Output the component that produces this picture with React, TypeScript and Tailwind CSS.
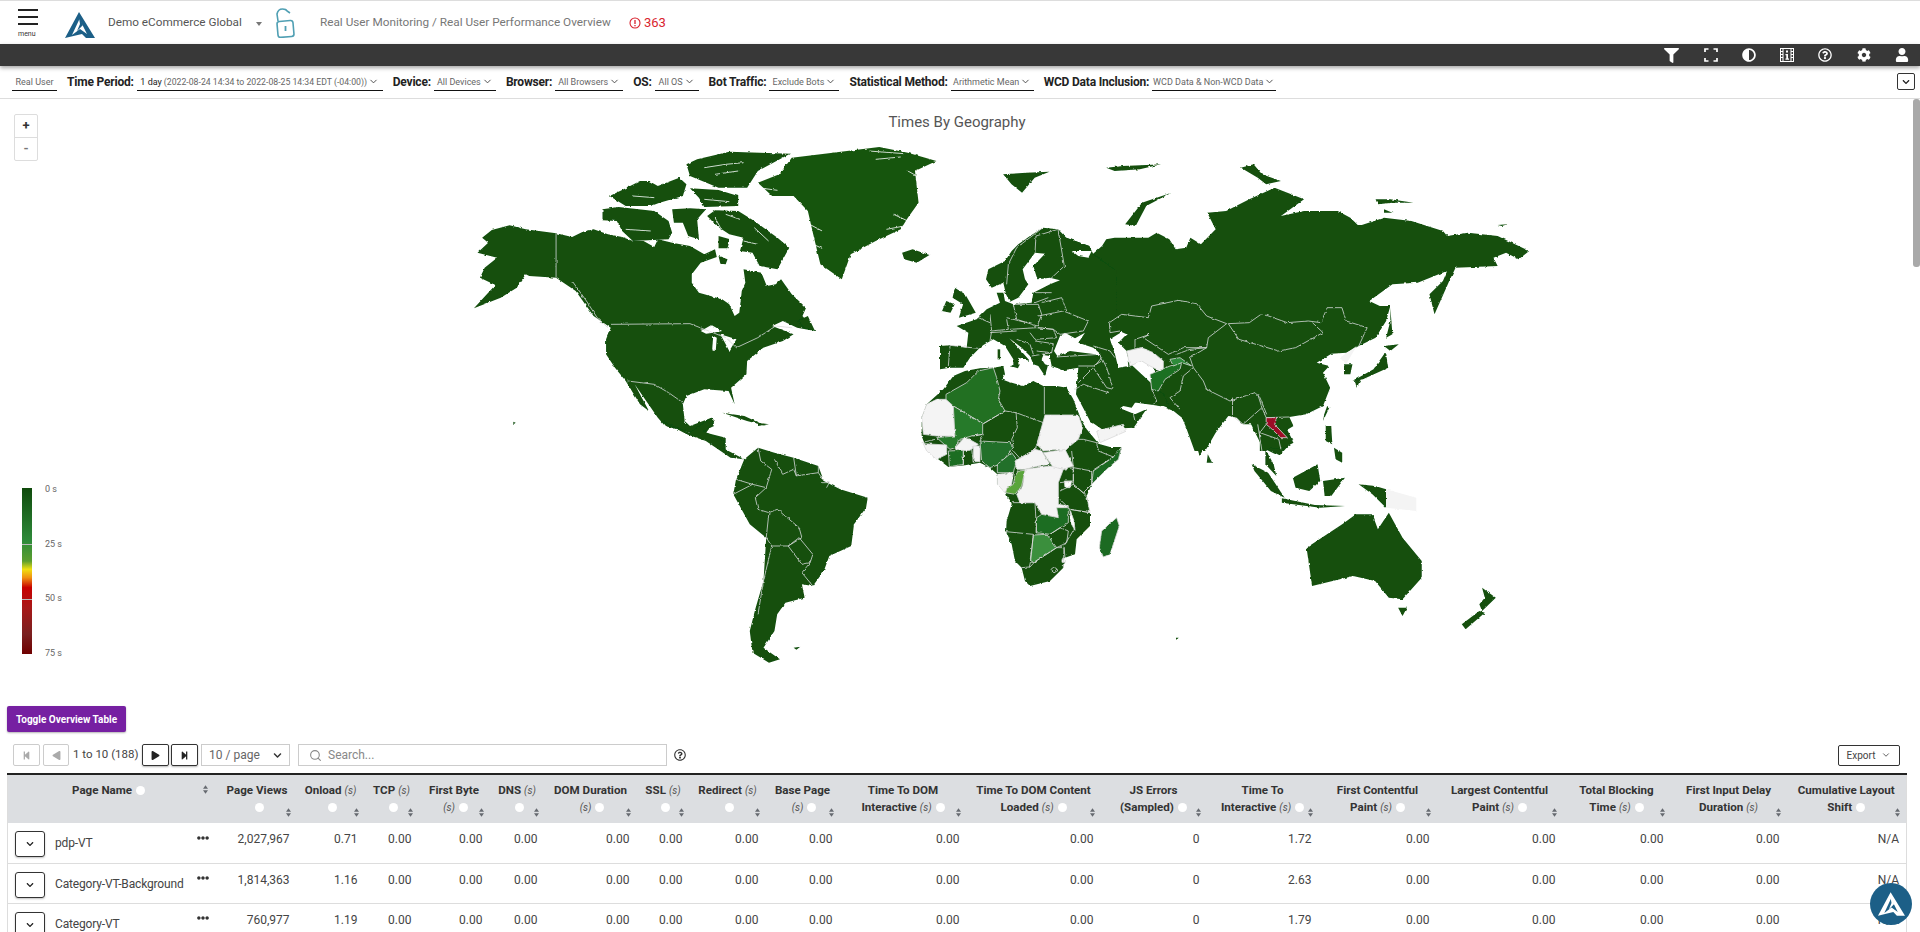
import { FaAdjust, FaChevronDown, FaCog, FaEllipsisH, FaFilter, FaRegQuestionCircle, FaStepBackward, FaStepForward, FaPlay, FaUser } from "react-icons/fa";
import { LuChevronDown, LuSearch } from "react-icons/lu";

const Z8 = "translate(440 130) scale(0.35714 0.33333)";
const Z9 = "translate(900 130) scale(0.42088 0.33333)";
const Z10 = "translate(640 380) scale(0.54855 0.33333)";
const ZE = "translate(950 250) scale(0.33333)";
const ZA = "translate(910 370) scale(0.33333)";

const DARK = "#124f0e";
const GRAY = "#f4f4f4";
const LINE = "#d9d9d9";

const northAmerica = [
  "195,283 240,295 325,307 370,318 400,302 430,295 470,310 510,318 540,330 570,330 600,348 610,325 650,335 700,345 740,370 770,355 775,378 730,395 705,430 705,455 725,485 790,505 810,520 825,555 838,545 845,480 855,455 850,415 900,425 915,465 940,460 955,445 985,490 1025,530 1015,555 1050,600 1000,590 960,570 930,585 990,610 960,630 905,650 860,690 858,730 815,770 825,820 808,780 740,775 690,795 680,820 685,870 700,885 760,860 770,870 745,905 800,920 800,960 770,940 700,905 630,885 610,860 545,760 585,840 560,820 520,750 490,710 465,670 465,625 478,590 430,555 380,480 325,440 250,435 240,430 215,470 170,500 95,532 155,462 112,440 125,410 160,380 105,365 135,335 118,320 145,297",
  "690,100 720,85 810,62 980,68 890,120 860,170 780,170 700,135",
  "700,172 780,177 835,195 835,225 740,228 725,200",
  "475,195 520,172 560,150 585,150 610,165 670,140 690,160 680,195 615,215 590,225 520,225",
  "455,235 500,228 600,240 640,270 650,305 640,325 540,330 510,300 495,270 455,268",
  "650,235 700,232 745,235 720,265 725,325 695,315 680,275 655,275",
  "748,255 770,238 835,240 880,270 945,320 978,350 945,415 895,405 875,365 840,360 850,320 810,310 775,285",
  "780,315 812,325 805,352 780,352",
  "780,375 805,385 800,400 785,398",
  "1000,570 1030,555 1050,600 1020,590",
  "205,872 212,875 206,880",
];

const greenland = "985,80 1100,65 1230,48 1310,65 1390,90 1330,120 1340,215 1310,260 1290,295 1220,330 1150,370 1125,445 1065,400 1045,310 1030,240 990,195 930,195 890,155 950,130";

const fjords = [
  "740,110 800,100 850,95",
  "770,130 835,120",
  "1200,60 1300,68",
  "1220,85 1290,78",
  "1310,120 1335,135",
  "1270,250 1310,270",
  "1250,295 1300,285",
  "1035,280 1070,300",
  "1045,340 1070,352",
  "890,170 945,178",
  "850,330 890,340",
  "520,295 590,300",
  "540,195 600,200",
  "740,205 810,212",
  "770,260 790,300",
  "800,250 840,265",
  "880,290 920,330",
];

const usBorders = [
  "325,307 325,440",
  "478,580 700,578 740,595 800,620 830,650 890,620 940,585 985,590",
  "525,750 600,760 640,785 680,815",
  "370,450 410,510 440,560 470,590",
];

const lakes = [
  "730,600 760,582 790,600 765,605 745,608",
  "765,615 775,620 772,660 762,658",
  "785,610 830,625 810,660 800,640",
];

// russia and asia east of the part traced in the europe group
const eurasia = "395,320 450,345 450,378 480,345 490,325 510,320 590,320 610,305 640,325 655,355 680,350 690,320 715,340 750,295 730,245 775,240 830,205 890,170 960,205 905,255 960,240 1040,240 1070,260 1090,285 1150,260 1215,270 1290,300 1300,315 1350,305 1420,315 1495,360 1470,385 1440,365 1410,380 1420,405 1320,410 1305,450 1270,550 1258,490 1290,450 1300,420 1280,430 1230,455 1170,460 1115,510 1140,525 1165,525 1155,570 1130,620 1090,645 1060,665 1025,668 990,695 1020,705 1005,725 1022,770 1005,825 965,850 925,858 935,885 915,900 935,935 905,955 880,950 870,960 855,960 855,900 835,880 815,880 800,860 780,855 750,905 725,960 700,960 680,890 670,860 650,840 620,825 600,700 450,640 385,520 385,405";

const europe = "279,-70 324,-65 349,-40 418,-15 430,10 500,60 500,300 640,430 660,470 610,462 560,455 515,455 490,420 525,445 555,455 545,470 520,465 510,472 555,490 589,475 551,530 456,535 420,510 378,430 385,350 340,358 305,345 300,320 285,375 265,345 250,340 240,315 215,290 178,262 200,285 240,330 205,320 205,342 190,345 190,325 165,285 130,265 100,282 85,295 60,320 40,350 0,350 -30,355 -30,285 0,283 50,290 55,245 20,225 80,205 110,175 150,155 140,125 160,125 165,150 190,160 245,155 250,125 300,100 330,88 300,80 262,85 250,45 285,8 255,5 218,55 225,85 235,100 205,140 180,152 168,130 160,95 125,110 108,85 115,55 165,30 185,0 205,-20 240,-45";

const euroSeas = [
  "312,300 330,255 345,245 375,262 405,245 385,275 430,290 455,312 400,305 360,300 322,315",
  "480,265 515,243 530,250 505,275 530,300 535,345 505,350 495,310",
  "280,312 300,315 300,345 285,340 275,325",
  "365,0 425,0 415,20 385,15",
];

const euroFills: [string, string][] = [
  ["530,300 575,290 610,305 640,330 640,365 600,345 575,330 540,345", GRAY],
  ["600,370 660,345 695,335 690,355 645,385 625,420 605,415", "#1f6f24"],
  ["660,325 690,320 725,345 695,335 670,345", "#2e8b3a"],
];

const euroBorders = [
  "478,215 515,190 595,200 605,165 685,148 740,158 770,195 830,218",
  "478,215 480,245 510,240",
  "555,265 600,250 580,260 640,300 655,310 700,290 770,290 775,260 830,218",
  "555,265 555,295 575,290",
  "680,310 720,295 770,290",
  "770,290 720,320 730,350 760,390 770,415 840,450 915,425 930,440 950,490",
  "730,350 700,375 690,420 660,440 690,475",
  "455,320 470,350 490,415",
  "605,415 620,450 610,460",
  "385,395 430,350 455,320",
  "430,350 470,410 490,415",
  "375,415 400,400 475,425",
  "550,490 555,510",
  "320,318 450,310 455,330 430,345 385,345",
  "430,285 480,300 495,320",
  "265,195 340,180 415,210 400,240 330,250 310,235 262,230",
  "275,155 335,140 350,180",
  "255,125 305,125",
  "255,155 295,140",
  "190,160 265,160 275,190 262,225 200,205 190,160",
  "120,190 125,240 175,235 170,205",
  "85,200 120,215",
  "125,240 120,270",
  "262,230 310,235 320,260 255,265 240,245",
  "255,270 310,278 305,305 260,300",
  "180,235 262,230",
  "120,245 200,240",
  "170,200 230,215",
  "200,265 240,280 250,310",
  "245,315 305,305",
  "0,285 -5,345",
  "0,283 85,292",
  "170,100 175,40 200,-10 279,-70",
  "255,5 258,-45 324,-65",
  "324,-65 343,45 300,85",
];

const asiaIslands = [
  "130,470 155,490 180,545 140,560 150,520 125,500",
  "100,540 110,510 130,520 120,545",
  "5,365 30,355 70,372 40,395 10,385",
  "245,130 300,125 355,122 320,140 290,185 265,160",
  "535,280 575,215 645,185 585,225 560,285",
  "490,110 530,105 620,100 570,115 510,120",
  "810,110 840,100 860,130 905,150 870,160 850,140",
  "1130,205 1165,205 1220,215 1170,215 1135,220",
  "1150,235 1170,245 1150,245",
  "1420,282 1443,280 1430,285",
  "1165,530 1170,610 1155,620 1165,570",
  "1150,645 1185,640 1165,660",
  "1155,670 1160,710 1100,745 1075,750 1125,715 1150,670",
  "1080,745 1095,745 1085,770",
  "1055,700 1075,700 1070,730 1055,730",
  "1015,825 1020,830 1005,870 1008,850",
  "232,655 238,655 238,685 232,685",
  "262,705 285,700 280,712",
];

const asiaBorders = [
  "780,578 830,575 860,548 920,575 970,570 1000,575 1015,530 1050,530 1060,570 1110,590 1090,645",
  "780,578 805,625 900,660 940,650 1005,605 980,575",
  "790,800 790,855 815,880 860,830",
  "850,790 860,830 870,860 925,858",
  "850,880 860,960",
  "870,880 855,905 900,925 905,955",
];

const africa = "100,55 130,15 165,0 210,-8 250,-10 280,-15 285,10 275,25 295,32 340,45 370,30 400,45 440,45 470,50 490,85 515,150 530,175 555,205 565,218 600,228 635,228 625,265 590,295 545,340 530,375 540,425 540,465 500,505 495,550 465,560 460,590 420,630 360,645 345,630 335,590 315,570 305,520 288,480 290,450 305,400 295,385 285,360 262,340 262,310 240,290 210,275 165,283 115,288 85,265 50,235 35,195 35,140 50,100";

const africaFills: [string, string][] = [
  ["35,140 50,100 80,85 108,85 130,105 135,195 80,195 40,190", GRAY],
  ["108,70 170,35 205,0 250,-10 260,20 270,60 265,85 285,120 220,158 180,135 130,105 108,85", "#206f22"],
  ["130,105 218,158 218,190 185,195 150,205 135,230 120,235 80,200 135,195", "#257a29"],
  ["40,218 110,222 110,250 80,265 50,240", GRAY],
  ["135,230 165,198 205,220 180,238 140,240", GRAY],
  ["115,240 160,238 160,280 118,287", "#1f6d22"],
  ["190,225 210,225 210,272 190,272", GRAY],
  ["210,210 300,215 310,230 270,280 240,290 215,270", "#22702a"],
  ["305,245 320,265 310,305 262,305 262,280", "#22702a"],
  ["315,270 375,235 395,240 420,280 385,285 345,295 320,295", GRAY],
  ["405,132 505,132 518,170 505,205 480,225 465,240 440,235 400,240 380,220 390,185", GRAY],
  ["400,245 465,235 490,285 460,295 430,290", GRAY],
  ["262,310 310,305 305,340 285,365 262,340", GRAY],
  ["345,295 420,285 460,295 445,335 445,400 475,405 445,440 395,430 375,395 330,395 320,370 338,345", GRAY],
  ["325,300 345,298 335,345 315,370 287,365 290,352 310,340 315,315", "#5aa53a"],
  ["380,440 395,430 445,440 440,410 475,410 475,455 420,490 378,485", "#1f6d22"],
  ["370,492 410,490 440,530 375,572 360,570 365,535", "#3a8f3e"],
  ["635,228 625,265 590,295 545,340 550,300 610,258", "#1c6a22"],
  ["620,440 628,465 600,550 580,558 568,530 575,480", "#1c6a22"],
  ["480,415 492,450 495,478 482,455", "#ffffff"],
  ["463,330 485,330 480,350 465,350", "#ffffff"],
  ["456,562 466,562 466,574 456,574", "#ffffff"],
  ["560,180 640,160 650,180 570,215", GRAY],
];

const africaBorders = [
  "285,120 318,125 400,155",
  "403,45 403,130",
  "318,125 322,170 305,205 310,230",
  "220,158 285,120",
  "190,195 220,190 210,210",
  "310,240 330,262 375,235 392,190",
  "505,205 520,205 560,215 565,240 610,258 545,300 490,290 485,240",
  "545,300 545,340 520,365 490,340 490,295",
  "450,360 490,340 530,375 540,425 480,415 450,385",
  "460,295 490,290 490,330 450,335",
  "480,415 540,425",
  "465,560 462,525 492,475",
  "420,490 450,470 475,480 470,515 440,530",
  "288,482 370,490 362,570 358,588 335,590",
  "305,395 375,395 380,485",
  "358,590 375,572 440,530 462,530 460,590",
  "423,595 432,588 442,595 435,605 425,603 423,595",
  "35,215 75,205",
  "160,238 160,282",
  "185,235 190,275",
];

const southAmerica = "190,235 215,200 245,215 280,230 325,255 335,300 365,325 415,350 412,380 390,430 385,495 345,525 335,570 315,615 295,610 300,650 265,665 250,700 245,750 225,800 255,835 235,845 205,815 200,750 210,685 225,600 230,470 200,430 170,340 175,295";

const saBorders = [
  "215,200 220,240 240,265 230,320 210,350 215,385 235,395 230,470",
  "245,235 260,280 280,265 285,285 325,275 335,300",
  "280,230 285,285",
  "325,255 325,275",
  "170,340 205,310 230,320",
  "175,295 205,310",
  "235,395 250,385 290,440 295,470 270,495 240,495 230,470",
  "270,495 290,470 315,520 310,545 295,550 270,495",
  "225,600 240,495",
  "295,575 315,615",
  "295,575 310,545",
  "215,700 225,600",
  "330,305 345,305 340,320",
];

const otherLand = [
  "40,120 90,155 130,110 135,135 115,150 155,180 150,200 190,235 165,230 120,180 85,160",
  "150,95 190,105 230,135 195,120",
  "215,125 235,130 215,135",
  "1000,110 1020,225 1035,180 1060,130 1020,80",
  "1105,100 1135,200 1140,205 1165,225 1190,180 1175,130 1150,80 1110,60",
  "1215,500 1280,430 1305,400 1335,400 1345,445 1365,395 1390,470 1425,540 1425,590 1390,655 1365,650 1340,600 1300,585 1225,615",
  "1382,680 1398,680 1390,705",
  "1535,620 1560,650 1535,690 1530,670 1540,650",
  "1530,690 1540,695 1505,745 1498,730",
  "1115,250 1145,275 1175,350 1150,330 1120,270",
  "1170,352 1230,372 1285,375 1240,380 1170,365",
  "1190,290 1235,250 1240,300 1220,330 1195,320",
  "1140,205 1155,250 1160,285 1140,250",
  "1245,300 1285,290 1260,345 1248,345",
  "1310,310 1340,315 1360,325 1360,380 1335,340",
  "1250,135 1260,135 1262,190 1250,180",
  "1265,200 1280,215 1280,245 1268,235",
  "1035,220 1043,245 1033,245",
  "975,770 982,770 978,776",
  "280,800 292,797 285,806",
];

const seaBorders = [
  "1115,100 1145,195",
  "1135,120 1190,180",
  "1140,190 1165,160 1180,170",
  "1150,80 1130,120 1130,170",
];

function Land(props: { pts: string; fill?: string; line?: boolean }) {
  return (
    <polygon
      points={props.pts}
      fill={props.fill || DARK}
      stroke={props.line ? LINE : "none"}
      strokeWidth={0.8}
      vectorEffect="non-scaling-stroke"
    />
  );
}

function Border(props: { pts: string; color?: string }) {
  return (
    <polyline
      points={props.pts}
      fill="none"
      stroke={props.color || LINE}
      strokeWidth={0.8}
      vectorEffect="non-scaling-stroke"
    />
  );
}

function WorldMap() {
  return (
    <svg viewBox="0 98 1920 602" className="absolute left-0 top-0 w-[1920px] h-[602px]">
      <defs>
        <filter id="coast" x="300" y="100" width="1300" height="600" filterUnits="userSpaceOnUse">
          <feTurbulence type="fractalNoise" baseFrequency="0.25" numOctaves="2" seed="4" result="n" />
          <feDisplacementMap in="SourceGraphic" in2="n" scale="2.5" xChannelSelector="R" yChannelSelector="G" />
        </filter>
      </defs>
      <g filter="url(#coast)">
        <g transform={Z8}>
          {northAmerica.map((p, i) => <Land key={i} pts={p} />)}
          <Land pts={greenland} fill="#15550f" />
          {lakes.map((p, i) => <Land key={i} pts={p} fill="#ffffff" />)}
          {fjords.map((p, i) => <Border key={i} pts={p} color="#ffffff" />)}
          {usBorders.map((p, i) => <Border key={i} pts={p} />)}
        </g>
        <g transform={Z10}>
          <Land pts={southAmerica} />
          {saBorders.map((p, i) => <Border key={i} pts={p} />)}
          {otherLand.map((p, i) => <Land key={i} pts={p} />)}
          <Land pts="1360,325 1415,350 1415,390 1360,380" fill={GRAY} />
          {seaBorders.map((p, i) => <Border key={i} pts={p} />)}
        </g>
        <g transform={Z9}>
          <Land pts={eurasia} />
          {asiaIslands.map((p, i) => <Land key={i} pts={p} />)}
          <Land pts="1045,680 1085,645 1060,700" fill={GRAY} />
          {asiaBorders.map((p, i) => <Border key={i} pts={p} />)}
          <Land pts="870,860 895,860 890,880 920,920 905,920 880,890 870,880" fill="#9c1025" line />
        </g>
        <g transform={ZE}>
          <Land pts={europe} />
          {euroSeas.map((p, i) => <Land key={i} pts={p} fill="#ffffff" />)}
          {euroFills.map((f, i) => <Land key={i} pts={f[0]} fill={f[1]} line />)}
          {euroBorders.map((p, i) => <Border key={i} pts={p} />)}
        </g>
        <g transform={ZA}>
          <Land pts={africa} />
          {africaFills.map((f, i) => <Land key={i} pts={f[0]} fill={f[1]} line />)}
          {africaBorders.map((p, i) => <Border key={i} pts={p} />)}
        </g>
      </g>
    </svg>
  );
}

function Logo(props: { className: string; fill: string }) {
  return (
    <svg viewBox="0 0 30 26" className={props.className} fill={props.fill}>
      <path d="M14 0 L0 26 L17 22 L21 26 L30 26 Z M14.5 7 L22 22 L15 17 L7 23 Z" fillRule="evenodd" />
      <path d="M13.5 3 L18 13 L12 19 L15 12 Z" />
    </svg>
  );
}

function Dropdown(props: { w: string; plain?: boolean; children: React.ReactNode }) {
  return (
    <div className={`${props.w} h-[22px] border-b border-[#111] flex items-end justify-center pb-[1px] text-[9px] leading-[14px] text-[#666] whitespace-nowrap`}>
      {props.children}
      {!props.plain && <LuChevronDown className="ml-[1px] mb-[2px] w-[11px] h-[11px] text-[#444] shrink-0" />}
    </div>
  );
}

function Filter(props: { label: string; w: string; children: React.ReactNode }) {
  return (
    <div className="flex items-center gap-[3px]">
      <span className="mt-[3px] text-[12px] font-bold tracking-[-0.2px] text-[#222] whitespace-nowrap">{props.label}</span>
      <Dropdown w={props.w}>{props.children}</Dropdown>
    </div>
  );
}

function Info() {
  return <span className="inline-block w-[9px] h-[9px] rounded-full bg-white ml-[4px] align-[-1px]" />;
}

function Sort() {
  return (
    <svg viewBox="0 0 6 10" className="w-[5px] h-[9px]" fill="#666a70">
      <path d="M3 0 L6 4 L0 4 Z M3 10 L0 6 L6 6 Z" />
    </svg>
  );
}

function Unit() {
  return <span className="font-normal italic text-[10px] text-[#555] ml-[3px]">(s)</span>;
}

interface Col {
  w: string;
  l1: string;
  l2: string;
  u1?: boolean;
  u2?: boolean;
  noInfo?: boolean;
}

const cols: Col[] = [
  { w: "w-[79px]", l1: "Page Views", l2: "" },
  { w: "w-[68px]", l1: "Onload", l2: "", u1: true },
  { w: "w-[54px]", l1: "TCP", l2: "", u1: true },
  { w: "w-[71px]", l1: "First Byte", l2: "", u2: true },
  { w: "w-[55px]", l1: "DNS", l2: "", u1: true },
  { w: "w-[92px]", l1: "DOM Duration", l2: "", u2: true },
  { w: "w-[53px]", l1: "SSL", l2: "", u1: true },
  { w: "w-[76px]", l1: "Redirect", l2: "", u1: true },
  { w: "w-[74px]", l1: "Base Page", l2: "", u2: true },
  { w: "w-[127px]", l1: "Time To DOM", l2: "Interactive", u2: true },
  { w: "w-[134px]", l1: "Time To DOM Content", l2: "Loaded", u2: true },
  { w: "w-[106px]", l1: "JS Errors", l2: "(Sampled)" },
  { w: "w-[112px]", l1: "Time To", l2: "Interactive", u2: true },
  { w: "w-[118px]", l1: "First Contentful", l2: "Paint", u2: true },
  { w: "w-[126px]", l1: "Largest Contentful", l2: "Paint", u2: true },
  { w: "w-[108px]", l1: "Total Blocking", l2: "Time", u2: true },
  { w: "w-[116px]", l1: "First Input Delay", l2: "Duration", u2: true, noInfo: true },
  { w: "w-[120px]", l1: "Cumulative Layout", l2: "Shift" },
];

const z = "0.00";
const rows = [
  { name: "pdp-VT", vals: ["2,027,967", "0.71", z, z, z, z, z, z, z, z, z, "0", "1.72", z, z, z, z, "N/A"] },
  { name: "Category-VT-Background", vals: ["1,814,363", "1.16", z, z, z, z, z, z, z, z, z, "0", "2.63", z, z, z, z, "N/A"] },
  { name: "Category-VT", vals: ["760,977", "1.19", z, z, z, z, z, z, z, z, z, "0", "1.79", z, z, z, z, "N/A"] },
];

function PageButton(props: { disabled?: boolean; w: string; children: React.ReactNode }) {
  return (
    <button className={`${props.w} h-[22px] flex items-center justify-center rounded-[2px] border ${props.disabled ? "border-[#ccc] text-[#aaa]" : "border-[#333] text-[#222] shadow-[0_1px_2px_rgba(0,0,0,0.3)]"}`}>
      {props.children}
    </button>
  );
}

export default function App() {
  return (
    <div className="relative w-[1920px] h-[932px] overflow-hidden bg-white font-['Roboto',sans-serif] text-[#444]">
      {/* top header */}
      <header className="h-[44px] border-t border-[#ddd] flex items-center">
        <div className="w-[65px] pl-[18px] flex flex-col items-start">
          <div className="w-[20px] flex flex-col gap-[5px] mt-[2px]">
            <span className="h-[2px] bg-[#222]" />
            <span className="h-[2px] bg-[#222]" />
            <span className="h-[2px] bg-[#222]" />
          </div>
          <span className="text-[7px] leading-[8px] mt-[5px] text-[#333]">menu</span>
        </div>
        <Logo className="w-[30px] h-[26px] mt-[4px]" fill="#1c5f87" />
        <span className="ml-[13px] text-[11.75px] text-[#555] w-[133px] whitespace-nowrap">Demo eCommerce Global</span>
        <span className="ml-[15px] mt-[3px] w-0 h-0 border-x-[3px] border-x-transparent border-t-[4px] border-t-[#777]" />
        <svg viewBox="0 0 20 30" className="ml-[14px] w-[20px] h-[30px]" fill="none" stroke="#4f9fb3" strokeWidth="1.6">
          <path d="M2 13 L1 6 Q2 1 6.5 1 Q10 1 11 3 L14 5" />
          <rect x="1.5" y="13" width="16" height="16" rx="2.5" transform="rotate(-5 9 21)" />
          <path d="M9.5 18 V23" strokeWidth="1.8" />
        </svg>
        <span className="ml-[24px] w-[290px] text-[11.75px] text-[#777] whitespace-nowrap">Real User Monitoring / Real User Performance Overview</span>
        <svg viewBox="0 0 12 12" className="ml-[19px] w-[12px] h-[12px]" fill="none" stroke="#d9232e" strokeWidth="1.1">
          <circle cx="6" cy="6" r="5" />
          <path d="M6 3 V7 M6 8 V9.2" strokeWidth="1.3" />
        </svg>
        <span className="ml-[3px] text-[13px] text-[#d9232e]">363</span>
      </header>

      {/* dark toolbar */}
      <div className="relative z-10 h-[22px] bg-[#383838] shadow-[0_2px_4px_rgba(0,0,0,0.35)] flex items-center justify-end pr-[11px] gap-[24.3px] text-white">
        <FaFilter className="w-[15px] h-[15px]" />
        <svg viewBox="0 0 14 14" className="w-[14px] h-[14px]" fill="none" stroke="white" strokeWidth="1.7">
          <path d="M1 4 V1 H4.5 M9.5 1 H13 V4 M13 10 V13 H9.5 M4.5 13 H1 V10" />
        </svg>
        <FaAdjust className="w-[14px] h-[14px]" />
        <svg viewBox="0 0 14 14" className="w-[14px] h-[14px]" fill="white">
          <path d="M0 0 H14 V14 H0 Z M1 1 V3 H2.5 V1 Z M1 4 V6 H2.5 V4 Z M1 7 V9 H2.5 V7 Z M1 10 V13 H2.5 V10 Z M11.5 1 V3 H13 V1 Z M11.5 4 V6 H13 V4 Z M11.5 7 V9 H13 V7 Z M11.5 10 V13 H13 V10 Z M3.5 1 V13 H10.5 V1 Z" fillRule="evenodd" />
          <path d="M6 2.5 H8 V4.5 H6 Z M5.5 6 H8 V10.5 H9 V11.8 H5.5 V10.5 H6.3 V7.2 H5.5 Z" />
        </svg>
        <FaRegQuestionCircle className="w-[14px] h-[14px]" />
        <FaCog className="w-[14px] h-[14px]" />
        <FaUser className="w-[14px] h-[14px]" />
      </div>

      {/* filters */}
      <div className="relative h-[33px] border-b border-[#ddd] flex items-start pt-[3px] pl-[12px] gap-[10px]">
        <Dropdown w="w-[45px]" plain>Real User</Dropdown>
        <Filter label="Time Period:" w="w-[246px]">
          <span className="text-[9px] text-[#222] mr-[2px]">1 day</span>
          <span className="text-[8.7px]">(2022-08-24 14:34 to 2022-08-25 14:34 EDT (-04:00))</span>
        </Filter>
        <Filter label="Device:" w="w-[62px]">All Devices</Filter>
        <Filter label="Browser:" w="w-[68px]">All Browsers</Filter>
        <Filter label="OS:" w="w-[44px]">All OS</Filter>
        <Filter label="Bot Traffic:" w="w-[70px]">Exclude Bots</Filter>
        <Filter label="Statistical Method:" w="w-[83px]">Arithmetic Mean</Filter>
        <Filter label="WCD Data Inclusion:" w="w-[124px]">{"WCD Data & Non-WCD Data"}</Filter>
        <button className="absolute right-[5px] top-[7px] w-[18px] h-[17px] border border-[#333] rounded-[2px] flex items-center justify-center text-[#222]">
          <FaChevronDown className="w-[8px] h-[8px]" />
        </button>
      </div>

      {/* map */}
      <section className="relative h-[601px]">
        <WorldMap />
        <h2 className="relative pt-[14px] text-center text-[15px] leading-[18px] text-[#555] pr-[6px]">Times By Geography</h2>
        <div className="absolute left-[14px] top-[15px] w-[24px] h-[47px] border border-[#ddd] rounded-[2px] flex flex-col text-[#333] text-[13px] font-bold">
          <span className="h-[23px] border-b border-[#ddd] flex items-center justify-center">+</span>
          <span className="flex-1 flex items-center justify-center text-[#777]">-</span>
        </div>
        <div className="absolute left-[22px] top-[389px] h-[166px] flex">
          <div className="relative w-[10px] h-[166px] bg-[linear-gradient(to_bottom,#0f4a0c_0%,#2e8b3a_32%,#5c9e2e_44%,#f0e010_49%,#f09010_54%,#c80000_60%,#a81818_72%,#7a2020_88%,#700000_100%)]">
            <span className="absolute left-0 top-[56px] w-[10px] h-[1px] bg-[#bbb]" />
            <span className="absolute left-0 top-[111px] w-[10px] h-[1px] bg-[#bbb]" />
          </div>
          <div className="absolute left-[23px] top-[-5px] h-[176px] flex flex-col justify-between text-[9px] leading-[12px] text-[#666] whitespace-nowrap">
            <span>0 s</span>
            <span>25 s</span>
            <span>50 s</span>
            <span>75 s</span>
          </div>
        </div>
      </section>

      {/* toggle */}
      <button className="block mt-[6px] ml-[7px] w-[119px] h-[26px] bg-[#7620a2] rounded-[2px] text-white text-[10px] font-bold shadow-[0_1px_2px_rgba(0,0,0,0.3)]">
        Toggle Overview Table
      </button>

      {/* pagination */}
      <div className="mt-[12px] h-[22px] flex items-center pl-[13px] pr-[20px]">
        <PageButton disabled w="w-[27px]"><FaStepBackward className="w-[9px] h-[9px]" /></PageButton>
        <span className="ml-[3px]" />
        <PageButton disabled w="w-[26px]"><FaPlay className="w-[9px] h-[9px] rotate-180" /></PageButton>
        <span className="ml-[4px] w-[69px] text-[11.5px] whitespace-nowrap text-[#444]">1 to 10 (188)</span>
        <PageButton w="w-[27px]"><FaPlay className="w-[9px] h-[9px]" /></PageButton>
        <span className="ml-[2px]" />
        <PageButton w="w-[27px]"><FaStepForward className="w-[9px] h-[9px]" /></PageButton>
        <div className="ml-[3px] w-[89px] h-[22px] border border-[#ccc] flex items-center justify-between px-[7px] text-[12px] text-[#666]">
          10 / page
          <FaChevronDown className="w-[9px] h-[9px] text-[#333]" />
        </div>
        <div className="ml-[8px] w-[369px] h-[22px] border border-[#ccc] flex items-center pl-[10px] text-[12px] text-[#888]">
          <LuSearch className="w-[13px] h-[13px] mr-[6px] text-[#888]" />
          Search...
        </div>
        <FaRegQuestionCircle className="ml-[7px] w-[12px] h-[12px] text-[#333]" />
        <button className="ml-auto w-[62px] h-[21px] border border-[#333] rounded-[2px] flex items-center justify-center gap-[6px] text-[10px] text-[#444]">
          Export
          <LuChevronDown className="w-[10px] h-[10px]" />
        </button>
      </div>

      {/* table */}
      <table className="mt-[7px] ml-[7px] w-[1899px] table-fixed border-collapse border-x border-[#ddd]">
        <colgroup>
          <col className="w-[210px]" />
          {cols.map((c) => <col key={c.l1} className={c.w} />)}
        </colgroup>
        <thead>
          <tr className="h-[49px] bg-[#dcdee1] border-t-2 border-[#222]">
            <th className="relative align-top pt-[8px] pl-[64px] text-left text-[11.6px] leading-[14px] font-bold text-[#333]">
              Page Name<Info />
              <span className="absolute right-[10px] top-[10px]"><Sort /></span>
            </th>
            {cols.map((c) => (
              <th key={c.l1} className="relative align-top pt-[7px] text-center text-[11.6px] leading-[17px] font-bold text-[#333] whitespace-nowrap">
                <div>{c.l1}{c.u1 && <Unit />}</div>
                <div className="h-[17px]">
                  {c.l2}{c.u2 && <Unit />}{!c.noInfo && <Info />}
                </div>
                <span className="absolute right-[6px] bottom-[6px] flex"><Sort /></span>
              </th>
            ))}
          </tr>
        </thead>
        <tbody>
          {rows.map((r) => (
            <tr key={r.name} className="h-[40px] border-b border-[#ddd]">
              <td className="align-top pt-[8px] pl-[7px]">
                <div className="flex items-center">
                  <button className="w-[30px] h-[26px] border border-[#333] rounded-[3px] shadow-[0_1px_2px_rgba(0,0,0,0.25)] flex items-center justify-center text-[#222]">
                    <FaChevronDown className="w-[8px] h-[8px]" />
                  </button>
                  <span className="ml-[10px] -mt-[2px] w-[142px] text-[12px] tracking-[-0.15px] whitespace-nowrap text-[#444]">{r.name}</span>
                  <FaEllipsisH className="w-[12px] h-[12px] text-[#333] -mt-[13px]" />
                </div>
              </td>
              {r.vals.map((v, i) => (
                <td key={i} className="align-top pt-[9px] pr-[7px] text-right text-[12px] leading-[14px] text-[#444]">{v}</td>
              ))}
            </tr>
          ))}
        </tbody>
      </table>

      {/* page scrollbar */}
      <div className="absolute right-0 top-[99px] w-[7px] h-[168px] bg-[#a9a9a9] rounded-[3px]" />

      {/* help bubble */}
      <div className="absolute left-[1870px] top-[883px] w-[42px] h-[42px] rounded-full bg-[#1c5f87] flex items-center justify-center">
        <Logo className="w-[27px] h-[24px]" fill="#ffffff" />
      </div>
    </div>
  );
}
